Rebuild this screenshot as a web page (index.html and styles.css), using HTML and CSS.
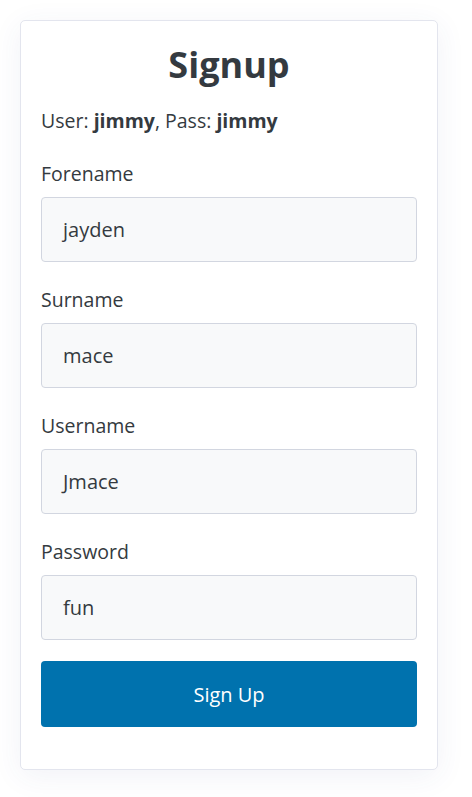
FILE: index.html
```html
<!DOCTYPE html>
<html>
<head>
<meta charset="utf-8">
<link rel="stylesheet" href="styles.css">
</head>
<body>
<div class="card">
  <h1 class="title">Signup</h1>
  <p class="hint">User: <b>jimmy</b>, Pass: <b>jimmy</b></p>
  <div class="field">
    <label class="label">Forename</label>
    <div class="input">jayden</div>
  </div>
  <div class="field">
    <label class="label">Surname</label>
    <div class="input">mace</div>
  </div>
  <div class="field">
    <label class="label">Username</label>
    <div class="input">Jmace</div>
  </div>
  <div class="field">
    <label class="label">Password</label>
    <div class="input">fun</div>
  </div>
  <button class="btn">Sign Up</button>
</div>
</body>
</html>
```
FILE: styles.css
```css
html, body {
  margin: 0;
  padding: 0;
  background: #ffffff;
}
body {
  padding: 20px 34px 28px 20px;
  font-family: "Open Sans", "Noto Sans", sans-serif;
  color: #343a40;
}
.card {
  width: 418px;
  box-sizing: border-box;
  border: 1px solid #e3e5ee;
  border-radius: 5px;
  background: #fff;
  box-shadow: 0 6px 30px rgba(60, 70, 140, 0.07);
  padding: 20px 20px 42px 20px;
  display: flex;
  flex-direction: column;
}
.title {
  margin: 0;
  text-align: center;
  font-size: 36px;
  font-weight: 700;
  line-height: 48px;
  color: #343a40;
}
.hint {
  margin: 18px 0 0 0;
  font-size: 19.5px;
  line-height: 28px;
}
.hint b {
  font-weight: 700;
}
.field {
  display: flex;
  flex-direction: column;
  margin-top: 25px;
}
.field + .field {
  margin-top: 24px;
}
.label {
  font-size: 19.5px;
  line-height: 28px;
  margin-bottom: 9px;
}
.input {
  height: 65px;
  box-sizing: border-box;
  border: 1px solid #d2d6e0;
  border-radius: 4px;
  background: #f8f9fa;
  padding: 0 21px;
  display: flex;
  align-items: center;
  font-size: 20px;
}
.btn {
  margin-top: 21px;
  height: 66px;
  border: none;
  border-radius: 4px;
  background: #0072ae;
  color: #fff;
  font-family: inherit;
  font-size: 20px;
}
```
